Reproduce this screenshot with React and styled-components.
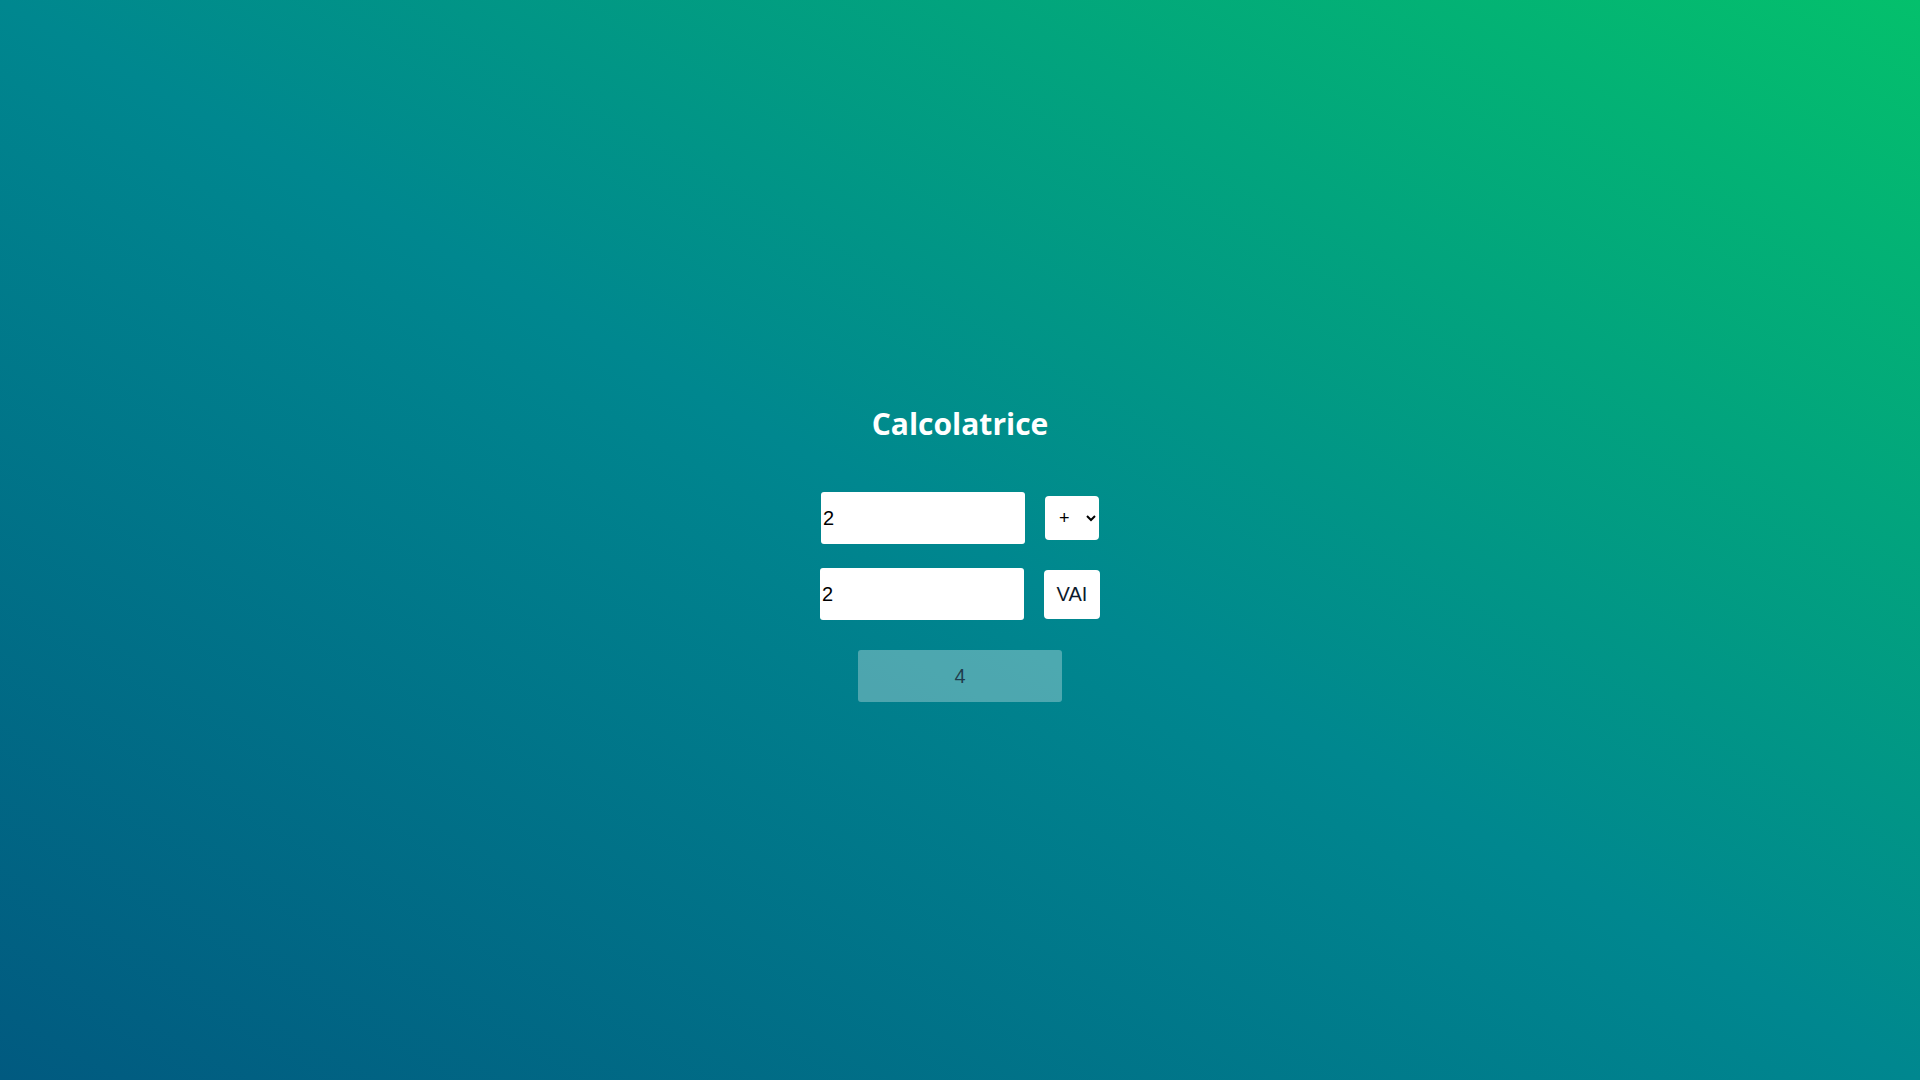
import React, { useState } from "react";
import styled, { createGlobalStyle } from "styled-components";

const Global = createGlobalStyle`
  html, body { margin: 0; padding: 0; }
  body { font-family: "Liberation Sans", Arial, sans-serif; }
`;

const Page = styled.main`
  min-height: 100vh;
  box-sizing: border-box;
  padding-top: 26px;
  display: flex;
  flex-direction: column;
  align-items: center;
  justify-content: center;
  background: linear-gradient(to top right, #015a80 0%, #00878f 50%, #04c06c 100%);
`;

const Title = styled.h1`
  margin: 0 0 48px;
  font-family: "Open Sans", "Noto Sans", sans-serif;
  font-weight: 700;
  font-size: 30px;
  line-height: 40px;
  color: #ffffff;
`;

const Row = styled.div`
  display: flex;
  align-items: center;
  gap: 20px;
  margin-bottom: ${(p) => p.$spacing}px;
`;

const NumberInput = styled.input`
  box-sizing: border-box;
  width: 204px;
  height: 52px;
  padding: 1px 2px;
  border: none;
  border-radius: 3px;
  background: #ffffff;
  font-family: "Liberation Sans", Arial, sans-serif;
  font-size: 20px;
  color: #000;
  outline: none;
`;

const OpSelect = styled.select`
  box-sizing: border-box;
  width: 54px;
  height: 44px;
  padding: 0 4px 0 10px;
  border: none;
  border-radius: 4px;
  background-color: #ffffff;
  font-family: "Liberation Sans", Arial, sans-serif;
  font-size: 18px;
  color: #000;
  outline: none;
`;

const GoButton = styled.button`
  box-sizing: border-box;
  width: 56px;
  height: 49px;
  padding: 0;
  border: none;
  border-radius: 4px;
  background: #ffffff;
  font-family: "Liberation Sans", Arial, sans-serif;
  font-size: 20px;
  color: #0d1a2b;
  cursor: pointer;
`;

const Result = styled.div`
  box-sizing: border-box;
  width: 204px;
  height: 52px;
  display: flex;
  align-items: center;
  justify-content: center;
  border-radius: 3px;
  background: rgba(255, 255, 255, 0.3);
  font-family: "Liberation Sans", Arial, sans-serif;
  font-size: 20px;
  color: rgba(20, 30, 50, 0.8);
`;

export default function App() {
  const [a, setA] = useState("2");
  const [b, setB] = useState("2");
  const [op, setOp] = useState("+");
  const [res, setRes] = useState(4);

  const calc = () => {
    const x = parseFloat(a) || 0;
    const y = parseFloat(b) || 0;
    const r = op === "+" ? x + y : op === "-" ? x - y : op === "*" ? x * y : y !== 0 ? x / y : "";
    setRes(r);
  };

  return (
    <>
      <Global />
      <Page>
        <Title>Calcolatrice</Title>
        <Row $spacing={24}>
          <NumberInput type="text" value={a} onChange={(e) => setA(e.target.value)} />
          <OpSelect value={op} onChange={(e) => setOp(e.target.value)}>
            <option value="+">+</option>
            <option value="-">-</option>
            <option value="*">*</option>
            <option value="/">/</option>
          </OpSelect>
        </Row>
        <Row $spacing={30}>
          <NumberInput type="text" value={b} onChange={(e) => setB(e.target.value)} />
          <GoButton onClick={calc}>VAI</GoButton>
        </Row>
        <Result>{res}</Result>
      </Page>
    </>
  );
}
